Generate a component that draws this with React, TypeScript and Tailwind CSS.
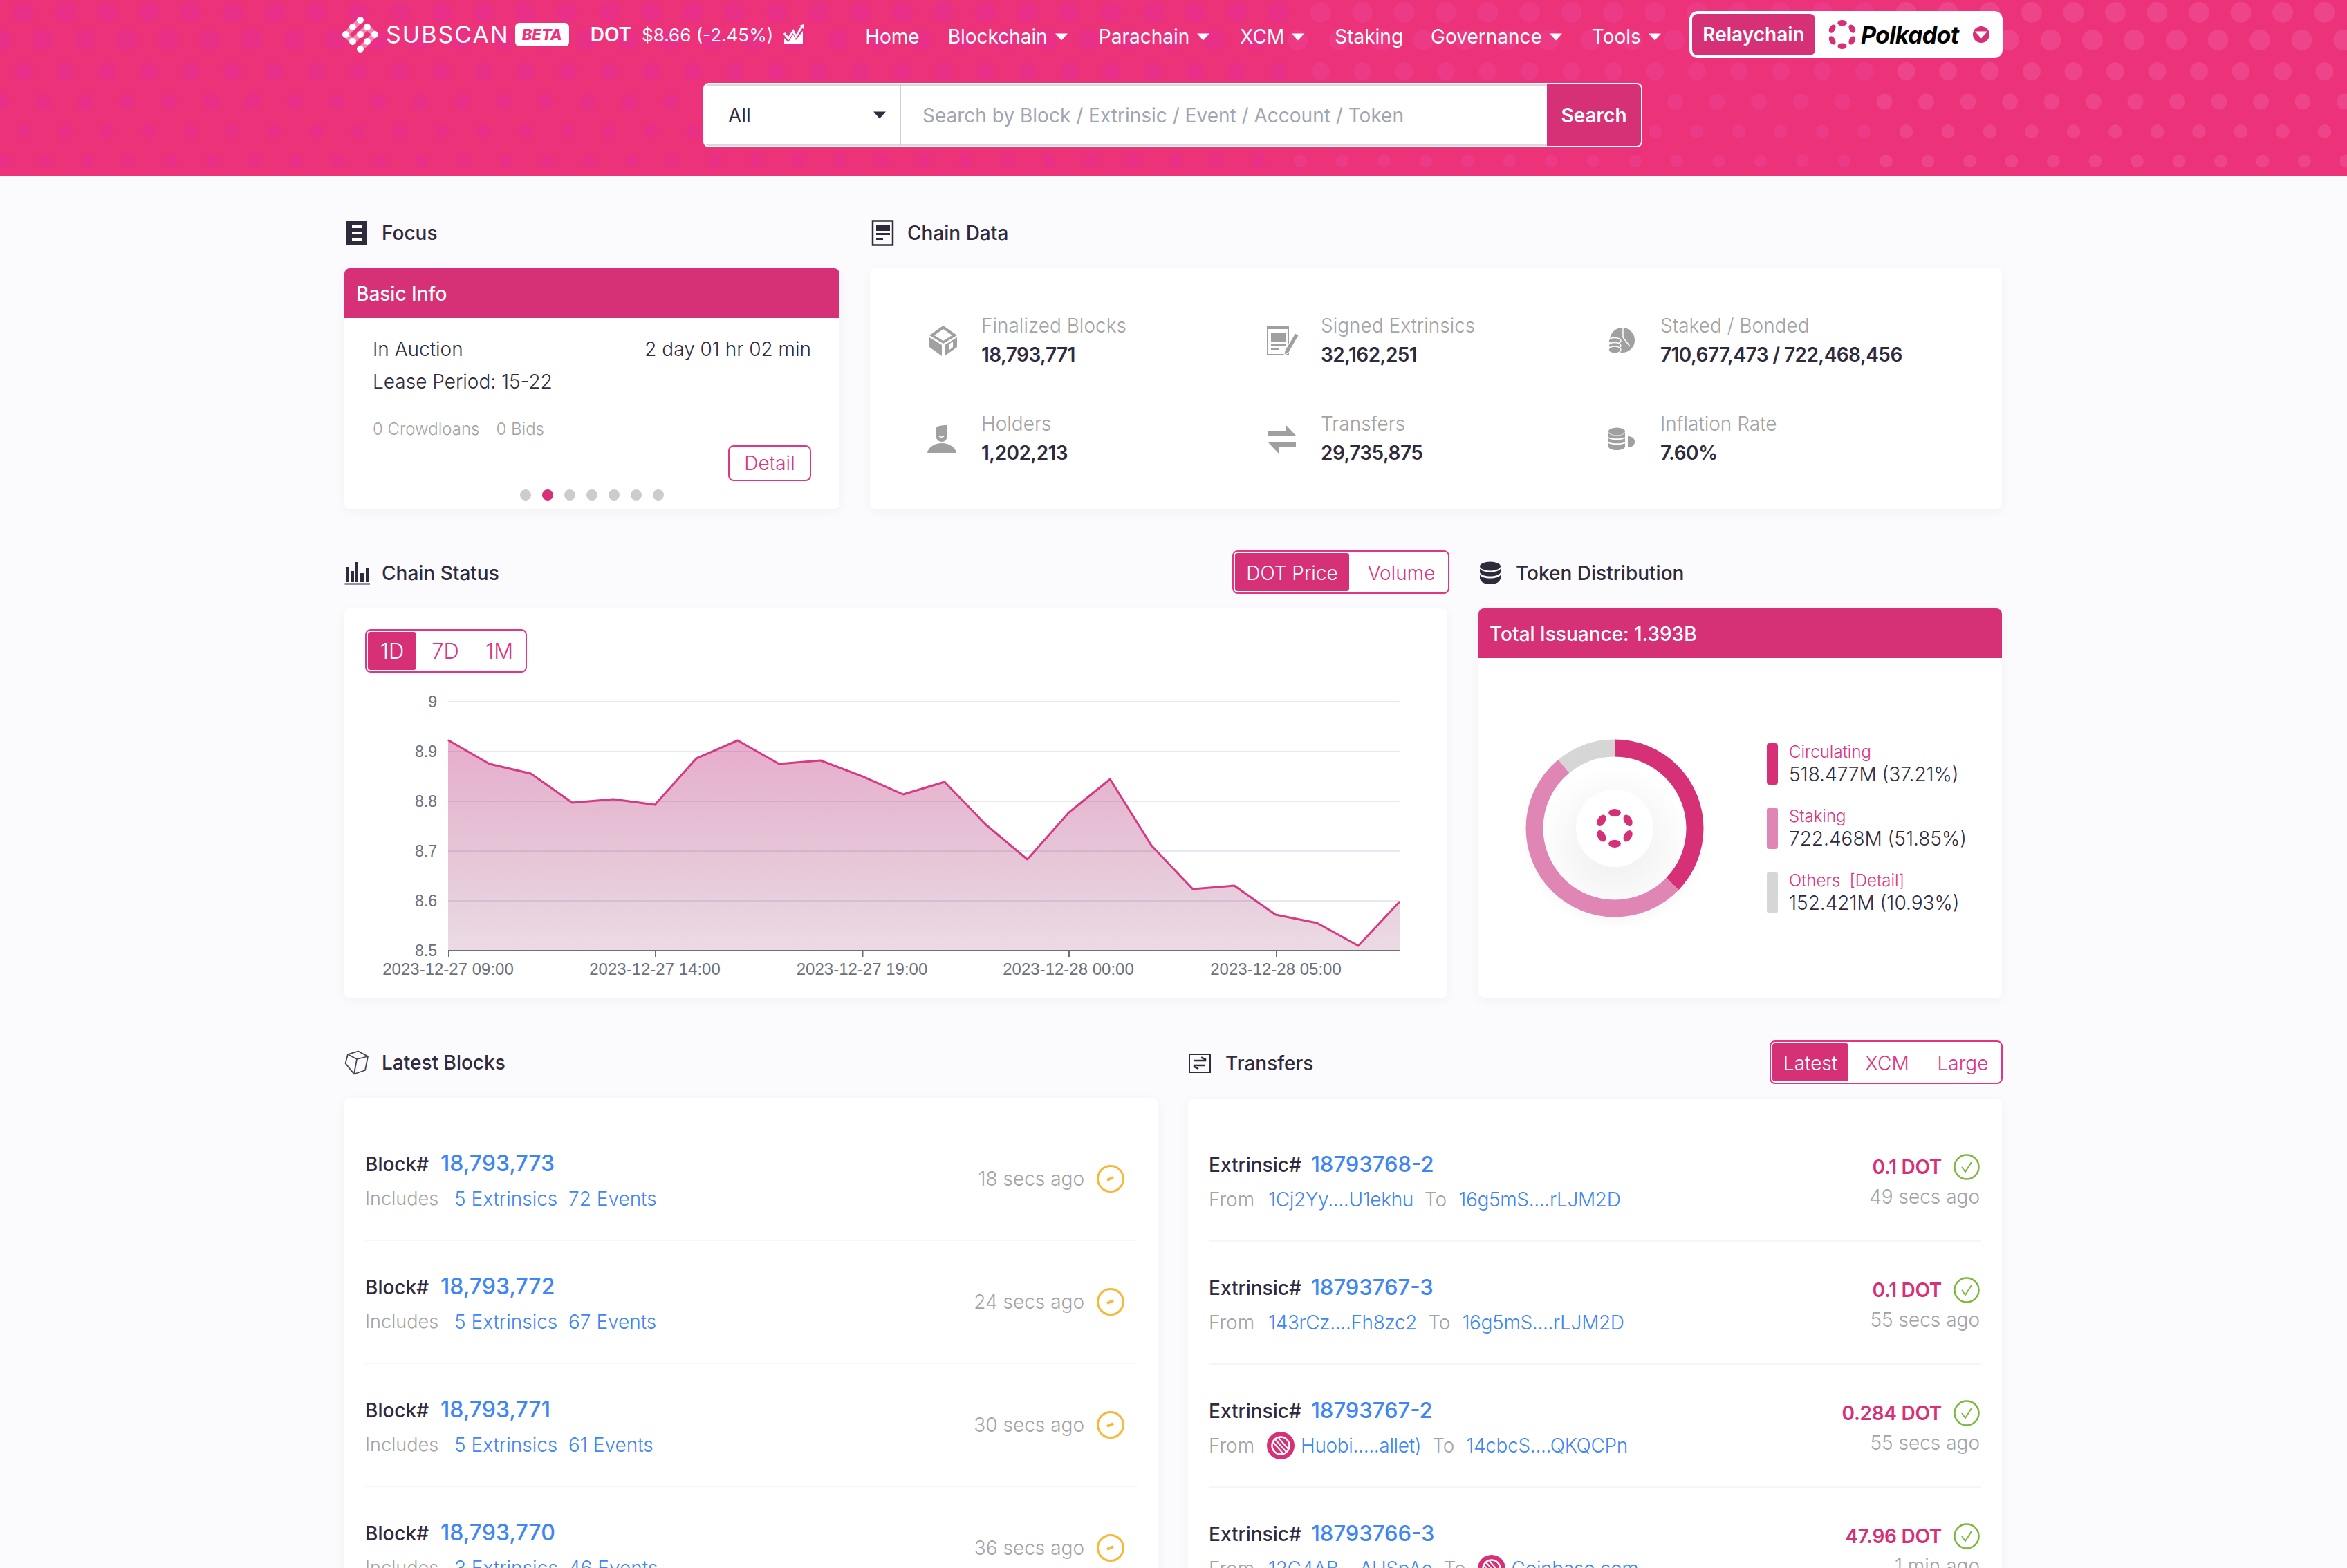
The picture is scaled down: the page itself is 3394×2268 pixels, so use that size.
import React from "react";

const PINK = "#d63076";

function Caret({ className = "", color = "#fff" }: { className?: string; color?: string }) {
  return (
    <svg width="18" height="11" viewBox="0 0 18 11" className={className}>
      <path d="M0 0.5H18L9 10.5Z" fill={color} />
    </svg>
  );
}

function DotLogo({ size, color = PINK }: { size: number; color?: string }) {
  return (
    <svg width={size} height={size} viewBox="0 0 60 60">
      <g fill={color}>
        <ellipse cx="30" cy="6" rx="9.5" ry="6" />
        <ellipse cx="30" cy="54" rx="9.5" ry="6" />
        <ellipse cx="9.5" cy="18" rx="9.5" ry="6" transform="rotate(-60 9.5 18)" />
        <ellipse cx="50.5" cy="18" rx="9.5" ry="6" transform="rotate(60 50.5 18)" />
        <ellipse cx="9.5" cy="42" rx="9.5" ry="6" transform="rotate(60 9.5 42)" />
        <ellipse cx="50.5" cy="42" rx="9.5" ry="6" transform="rotate(-60 50.5 42)" />
      </g>
    </svg>
  );
}

function HeaderDots() {
  const rows = [
    { y: 18, r: 15, x: 34 },
    { y: 58, r: 15, x: 1 },
    { y: 103, r: 13, x: 34 },
    { y: 147, r: 11.5, x: 2.5 },
    { y: 190, r: 10, x: 34 },
    { y: 233, r: 9.5, x: 5 },
  ];
  const cols = Array.from({ length: 57 }, (_, i) => i);
  return (
    <svg className="absolute inset-0" width="3394" height="254">
      {rows.map((row) =>
        cols.map((c) => {
          const cx = row.x + c * 60.5;
          const t = cx / 3394;
          const fill = t > 0.8 ? "#ee4489" : t > 0.55 ? "#ec3a86" : "#e93088";
          return <circle key={row.y + "-" + c} cx={cx} cy={row.y} r={row.r} fill={fill} />;
        })
      )}
    </svg>
  );
}

function SubscanMark() {
  const dots = [
    [31, 10],
    [20, 20],
    [41, 20],
    [10, 31],
    [31, 31],
    [52, 31],
    [20, 41],
    [41, 41],
    [31, 52],
  ];
  return (
    <svg width="62" height="62" viewBox="0 0 62 62">
      <g opacity="0.42" stroke="#fff" strokeWidth="8" fill="none" strokeLinejoin="miter">
        <path d="M31 10L10 31L20 41L41 20L52 31L31 52" />
      </g>
      {dots.map(([x, y]) => (
        <circle key={x + "-" + y} cx={x} cy={y} r="5" fill="#fff" />
      ))}
    </svg>
  );
}

function Header() {
  const nav: [string, boolean, string][] = [
    ["Home", false, "ml-[88px]"],
    ["Blockchain", true, "ml-[41px]"],
    ["Parachain", true, "ml-[45px]"],
    ["XCM", true, "ml-[44px]"],
    ["Staking", false, "ml-[44px]"],
    ["Governance", true, "ml-[40px]"],
    ["Tools", true, "ml-[43px]"],
  ];
  return (
    <header className="relative h-[254px] bg-[#ec3278] overflow-hidden">
      <HeaderDots />
      <div className="relative w-[2397px] ml-[498px] pt-[16px]">
        <div className="flex items-center h-[68px] text-white">
          <span className="ml-[-8px]">
            <SubscanMark />
          </span>
          <span className="ml-[6px] text-[34px] font-normal tracking-[0.06em] leading-none">SUBSCAN</span>
          <span className="ml-[8px] h-[34px] w-[78px] rounded-md bg-white text-[#ec3278] text-[22px] font-extrabold italic flex items-center justify-center">
            BETA
          </span>
          <span className="ml-[31px] font-semibold text-[28px]">DOT</span>
          <span className="ml-[15px] text-[26px]">$8.66 (-2.45%)</span>
          <svg className="ml-[15px]" width="30" height="30" viewBox="0 0 30 30">
            <path d="M1 13L7 21L14 10L18 18L27 3" fill="none" stroke="#fff" strokeWidth="3" />
            <path d="M1 29V20L7 26L14 15L18 23L28 10V29Z" fill="#fff" />
            <path d="M23 2L29 0L29 7Z" fill="#fff" />
          </svg>
          {nav.map(([t, c, m]) => (
            <span key={t} className={"flex items-center gap-[11px] text-[28px] pt-[6px] " + m}>
              {t}
              {c && <Caret />}
            </span>
          ))}
          <div className="ml-auto -mr-[1px] w-[453px] h-[68px] bg-white rounded-xl flex items-center pl-[4px]">
            <span className="w-[178px] h-[60px] rounded-lg bg-[#d63076] font-semibold text-[28px] flex items-center justify-center">
              Relaychain
            </span>
            <span className="ml-[18px] flex items-center">
              <DotLogo size={42} />
            </span>
            <span className="ml-[6px] text-black font-bold italic text-[34px] tracking-[-0.02em]">Polkadot</span>
            <span className="ml-[20px] w-[24px] h-[24px] rounded-full bg-[#d63076] flex items-center justify-center">
              <Caret />
            </span>
          </div>
        </div>
        <div className="mt-[36px] ml-[519px] w-[1358px] h-[93px] bg-white rounded-lg border-2 border-white flex overflow-hidden">
          <div className="w-[284px] flex items-center justify-between pl-[34px] pr-[20px] border-r-2 border-[#d0d0d4] shadow-[inset_0_3px_0_#dadada,inset_0_-3px_0_#dadada] text-[#302b3c] text-[28px]">
            All
            <Caret color="#302b3c" />
          </div>
          <div className="flex-1 flex items-center pl-[31px] shadow-[inset_0_3px_0_#dadada,inset_0_-3px_0_#dadada] text-[#a1a5b0] text-[28px]">
            Search by Block / Extrinsic / Event / Account / Token
          </div>
          <div className="w-[136px] bg-[#d63076] text-white font-semibold text-[28px] flex items-center justify-center">
            Search
          </div>
        </div>
      </div>
    </header>
  );
}

function Title({ icon, text }: { icon: React.ReactNode; text: string }) {
  return (
    <div className="flex items-center h-[60px]">
      <span className="w-[54px] h-[40px] flex items-center">{icon}</span>
      <span className="text-[28px] font-medium text-[#302b3c]">{text}</span>
    </div>
  );
}

function Toggle({ items, active, w }: { items: [string, number, string?][]; active: number; w: string }) {
  return (
    <div className={"h-[63px] border-2 border-[#e0357f] rounded-lg p-[2px] flex bg-white " + w}>
      {items.map(([t, width, extra], i) => (
        <span
          key={t}
          style={{ width }}
          className={
            "flex items-center justify-center rounded font-light pt-[2px] " +
            (extra ?? "text-[28px]") +
            " " +
            (i === active ? "bg-[#d63076] text-white" : "text-[#e0357f]")
          }
        >
          {t}
        </span>
      ))}
    </div>
  );
}

const cardCls = "bg-white rounded-lg shadow-[0_4px_16px_rgba(60,60,110,0.05)]";

function IconFocus() {
  return (
    <svg width="36" height="36" viewBox="0 0 36 36">
      <rect x="3" y="1" width="30" height="34" fill="#302b3c" />
      <rect x="11" y="7" width="14" height="4" fill="#fff" />
      <rect x="11" y="16" width="14" height="4" fill="#fff" />
      <rect x="11" y="25" width="14" height="4" fill="#fff" />
    </svg>
  );
}
function IconChainData() {
  return (
    <svg width="36" height="38" viewBox="0 0 36 38">
      <rect x="4" y="1.5" width="29" height="35" fill="none" stroke="#302b3c" strokeWidth="2.5" />
      <rect x="9" y="7" width="20" height="9" fill="#302b3c" />
      <rect x="9" y="19" width="20" height="3" fill="#302b3c" />
      <rect x="9" y="26" width="10" height="3" fill="#302b3c" />
    </svg>
  );
}
function IconStatus() {
  return (
    <svg width="38" height="34" viewBox="0 0 38 34">
      <path d="M0.5 32.5H37" stroke="#302b3c" strokeWidth="2" />
      <rect x="2" y="8" width="4" height="22" fill="#302b3c" />
      <rect x="9" y="14" width="5" height="16" fill="#302b3c" />
      <rect x="16" y="1" width="4" height="29" fill="#302b3c" />
      <rect x="23" y="17" width="5" height="13" fill="#302b3c" />
      <rect x="31" y="10" width="4" height="20" fill="#302b3c" />
    </svg>
  );
}
function IconDb() {
  return (
    <svg width="34" height="34" viewBox="0 0 34 34" fill="#302b3c">
      <ellipse cx="17" cy="7" rx="15" ry="6.5" />
      <path d="M2 10.5C4 14 10 15.5 17 15.5S30 14 32 10.5V16C30 20 24 21.5 17 21.5S4 20 2 16Z" />
      <path d="M2 19.5C4 23 10 24.5 17 24.5S30 23 32 19.5V25C30 31 24 33 17 33S4 31 2 25Z" />
    </svg>
  );
}
function IconCube() {
  return (
    <svg width="36" height="36" viewBox="0 0 36 36" fill="none" stroke="#4a4655" strokeWidth="1.8" strokeLinejoin="round">
      <path d="M20 1.5L34 9L30 29L14 34.5L1.5 19L5 6Z" />
      <path d="M5 6L18 13L34 9" />
      <path d="M18 13L14 34.5" />
    </svg>
  );
}
function IconTransferBox() {
  return (
    <svg width="34" height="30" viewBox="0 0 34 30" fill="none">
      <rect x="2" y="2" width="30" height="26" stroke="#302b3c" strokeWidth="2" />
      <path d="M9 11H25V9L19 6.5" stroke="#302b3c" strokeWidth="2.5" />
      <path d="M25 18H9V20L15 23" stroke="#302b3c" strokeWidth="2.5" />
    </svg>
  );
}

const G = "#a0a0a0";
const statIcons: React.ReactNode[] = [
  <svg key="a" width="42" height="46" viewBox="0 0 42 46">
    <path d="M21 1L41 15L21 27L1 15Z M21 6L8 15L21 23L34 15Z" fill={G} fillRule="evenodd" />
    <path d="M1 18L19 29V45L1 32Z" fill={G} />
    <path d="M23 29L41 18V32L23 45Z M29 28V37L35 32V24Z" fill={G} fillRule="evenodd" />
  </svg>,
  <svg key="b" width="48" height="44" viewBox="0 0 48 44" className="-ml-[3px]">
    <path d="M1 1H33V43H1Z M3 5V41H31V5Z" fill={G} fillRule="evenodd" />
    <rect x="7" y="11" width="21" height="12" fill={G} />
    <rect x="7" y="26" width="21" height="3" fill={G} />
    <rect x="7" y="32" width="11" height="3" fill={G} />
    <path d="M42 11L47 14L32 40L26 42L27 36Z" fill={G} stroke="#fff" strokeWidth="1" />
  </svg>,
  <svg key="c" width="40" height="38" viewBox="0 0 40 38">
    <circle cx="21" cy="18" r="18" fill={G} />
    <path d="M22 0V14L32 27" stroke="#fff" strokeWidth="1.5" fill="none" />
    <ellipse cx="10" cy="19" rx="9" ry="4.5" fill={G} stroke="#fff" strokeWidth="1.5" />
    <ellipse cx="10" cy="26" rx="9" ry="4.5" fill={G} stroke="#fff" strokeWidth="1.5" />
    <ellipse cx="10" cy="32" rx="9" ry="5" fill={G} stroke="#fff" strokeWidth="1.5" />
  </svg>,
  <svg key="d" width="44" height="42" viewBox="0 0 44 42" className="-ml-[3px]">
    <path d="M13 7C13 3 18 1 30 1V15C30 22 26 25 22 25C17 25 13 21 13 15Z" fill={G} />
    <path d="M18 16C19 19 24 19 25 16" stroke="#fff" strokeWidth="1.5" fill="none" />
    <path d="M1 41C2 33 12 27 22 27S42 33 43 41Z" fill={G} />
  </svg>,
  <svg key="e" width="40" height="44" viewBox="0 0 40 44">
    <path d="M25 1L40 17H0V11H25Z" fill={G} />
    <path d="M40 27V33H15V43L0 27Z" fill={G} />
  </svg>,
  <svg key="f" width="40" height="34" viewBox="0 0 40 34">
    <ellipse cx="13" cy="6" rx="12" ry="5.5" fill={G} />
    <path d="M1 8V28C1 31 7 33 13 33S25 31 25 28V8C23 11 18 12 13 12S3 11 1 8Z" fill={G} />
    <path d="M1 15C5 18 21 18 25 15M1 22C5 25 21 25 25 22" stroke="#fff" strokeWidth="2" fill="none" />
    <path d="M29 13C36 13 39 17 39 21C39 26 35 29 29 29Z" fill={G} />
  </svg>,
];

function Stat({ icon, label, value }: { icon: React.ReactNode; label: string; value: string }) {
  return (
    <div className="flex h-[77px] items-center">
      <span className="w-[76px] flex items-center">{icon}</span>
      <div className="flex flex-col gap-[6px] -mt-[2px]">
        <span className="text-[#a3a3a3] text-[28px] font-light leading-[36px]">{label}</span>
        <span className="text-[#302b3c] text-[28px] font-semibold leading-[36px] tracking-[-0.02em]">{value}</span>
      </div>
    </div>
  );
}

function TopRow() {
  return (
    <div className="grid grid-cols-[716px_1637px] gap-x-[44px]">
      <section>
        <Title icon={<IconFocus />} text="Focus" />
        <div className={"mt-[21px] h-[348px] flex flex-col overflow-hidden " + cardCls}>
          <div className="h-[72px] bg-[#d63076] text-white text-[28px] font-medium flex items-center pl-[17px] pt-[2px]">Basic Info</div>
          <div className="flex flex-col px-[41px] pt-[27px] text-[#302b3c] text-[28px] font-light">
            <div className="flex justify-between leading-[36px]">
              <span>In Auction</span>
              <span>2 day 01 hr 02 min</span>
            </div>
            <div className="mt-[11px] leading-[36px]">Lease Period: 15-22</div>
            <div className="mt-[33px] leading-[36px] text-[24px] text-[#a3a3a3] flex gap-[24px]">
              <span>0 Crowdloans</span>
              <span>0 Bids</span>
            </div>
            <div className="self-end mt-[5px] w-[120px] h-[52px] border-2 border-[#e0357f] rounded-lg text-[#e0357f] flex items-center justify-center">
              Detail
            </div>
          </div>
          <div className="mt-[12px] flex justify-center gap-[16px]">
            {[0, 1, 2, 3, 4, 5, 6].map((i) => (
              <span key={i} className={"w-[16px] h-[16px] rounded-full " + (i === 1 ? "bg-[#d63076]" : "bg-[#cccccc]")} />
            ))}
          </div>
        </div>
      </section>
      <section>
        <Title icon={<IconChainData />} text="Chain Data" />
        <div className={"mt-[21px] h-[348px] pl-[85px] pt-[66px] grid grid-cols-[491px_491px_1fr] content-start gap-y-[65px] " + cardCls}>
          <Stat icon={statIcons[0]} label="Finalized Blocks" value="18,793,771" />
          <Stat icon={statIcons[1]} label="Signed Extrinsics" value="32,162,251" />
          <Stat icon={statIcons[2]} label="Staked / Bonded" value="710,677,473 / 722,468,456" />
          <Stat icon={statIcons[3]} label="Holders" value="1,202,213" />
          <Stat icon={statIcons[4]} label="Transfers" value="29,735,875" />
          <Stat icon={statIcons[5]} label="Inflation Rate" value="7.60%" />
        </div>
      </section>
    </div>
  );
}

const pts: number[] = [1070.5, 1105, 1119, 1161, 1156, 1164, 1097, 1071, 1105, 1100, 1122.6, 1149, 1131, 1193, 1243, 1175.5, 1127, 1223, 1286, 1281, 1323, 1335, 1368, 1304];

function Chart() {
  const line = pts.map((y, i) => `${(648 + i * 59.83).toFixed(1)},${y}`).join(" ");
  const grid: [string, number][] = [
    ["9", 1015],
    ["8.9", 1087],
    ["8.8", 1159],
    ["8.7", 1231],
    ["8.6", 1303],
  ];
  const ticks: [string, number][] = [
    ["2023-12-27 09:00", 648],
    ["2023-12-27 14:00", 947],
    ["2023-12-27 19:00", 1246.5],
    ["2023-12-28 00:00", 1545],
    ["2023-12-28 05:00", 1845],
  ];
  const font = { fontFamily: "'Liberation Sans', sans-serif" };
  return (
    <svg width="1595" height="470" viewBox="498 973 1595 470" className="block">
      <defs>
        <linearGradient id="area" x1="0" x2="0" y1="0" y2="1">
          <stop offset="0" stopColor="#c4327f" stopOpacity="0.4" />
          <stop offset="1" stopColor="#8a2a60" stopOpacity="0.17" />
        </linearGradient>
      </defs>
      {grid.map(([t, y]) => (
        <g key={t}>
          <line x1="648" x2="2024" y1={y} y2={y} stroke="#e6e8f4" strokeWidth="2" />
          <text x="632" y={y + 8} textAnchor="end" fontSize="23" fill="#6e7079" style={font}>
            {t}
          </text>
        </g>
      ))}
      <text x="632" y="1383" textAnchor="end" fontSize="23" fill="#6e7079" style={font}>
        8.5
      </text>
      <polygon points={`648,1375 ${line} 2024,1375`} fill="url(#area)" />
      <polyline points={line} fill="none" stroke="#d63a82" strokeWidth="3" strokeLinejoin="round" />
      <line x1="648" x2="2024" y1="1375" y2="1375" stroke="#6e7079" strokeWidth="2" />
      {ticks.map(([t, x]) => (
        <g key={t}>
          <line x1={x + 1} x2={x + 1} y1="1375" y2="1384" stroke="#6e7079" strokeWidth="2" />
          <text x={x} y="1410" textAnchor="middle" fontSize="24" fill="#6e7079" style={font}>
            {t}
          </text>
        </g>
      ))}
    </svg>
  );
}

function Donut() {
  const c = { cx: 150, cy: 150, r: 116, fill: "none", strokeWidth: 25 };
  return (
    <div className="relative w-[300px] h-[300px]">
      <svg width="300" height="300" viewBox="0 0 300 300" className="absolute inset-0">
        <defs>
          <radialGradient id="disc" cx="0.5" cy="0.62" r="0.55">
            <stop offset="0.3" stopColor="#f3f3f3" />
            <stop offset="1" stopColor="#ffffff" />
          </radialGradient>
          <filter id="soft" x="-30%" y="-30%" width="160%" height="160%">
            <feGaussianBlur stdDeviation="9" />
          </filter>
        </defs>
        <circle cx="150" cy="158" r="126" fill="#000" opacity="0.04" filter="url(#soft)" />
        <circle cx="150" cy="150" r="128" fill="#fff" />
        <circle cx="150" cy="150" r="105" fill="url(#disc)" />
        <circle cx="150" cy="150" r="56" fill="#fff" />
        <g transform="rotate(-90 150 150)">
          <circle {...c} stroke="#d63076" pathLength={100} strokeDasharray="37.21 100" />
          <circle {...c} stroke="#e086b5" pathLength={100} strokeDasharray="51.85 100" strokeDashoffset={-37.21} />
          <circle {...c} stroke="#d6d6d6" pathLength={100} strokeDasharray="10.94 100" strokeDashoffset={-89.06} />
        </g>
      </svg>
      <span className="absolute left-[122px] top-[122px]">
        <DotLogo size={56} />
      </span>
    </div>
  );
}

function Legend({ color, label, value }: { color: string; label: React.ReactNode; value: string }) {
  return (
    <div className="flex h-[60px] gap-[16px]">
      <span className={"w-[16px] h-[60px] rounded " + color} />
      <div className="flex flex-col justify-between">
        <span className="text-[#e0357f] text-[24px] font-light leading-[26px] flex gap-[13px]">{label}</span>
        <span className="text-[#302b3c] text-[28px] font-light leading-[30px]">{value}</span>
      </div>
    </div>
  );
}

function MiddleRow() {
  return (
    <div className="mt-[63px] grid grid-cols-[1595px_757px] gap-x-[45px]">
      <section>
        <div className="flex justify-between items-center">
          <Title icon={<IconStatus />} text="Chain Status" />
          <Toggle items={[["DOT Price", 165], ["Volume", 141, "text-[28px] pl-[10px]"]]} active={0} w="w-[314px] -mr-[3px] -mt-[3px]" />
        </div>
        <div className={"mt-[21px] h-[563px] " + cardCls}>
          <div className="pt-[30px] pl-[30px]">
            <Toggle
              items={[
                ["1D", 70, "text-[31px]"],
                ["7D", 84, "text-[31px]"],
                ["1M", 72, "text-[31px]"],
              ]}
              active={0}
              w="w-[234px]"
            />
          </div>
          <Chart />
        </div>
      </section>
      <section>
        <Title icon={<IconDb />} text="Token Distribution" />
        <div className={"mt-[21px] h-[563px] flex flex-col overflow-hidden " + cardCls}>
          <div className="h-[72px] bg-[#d63076] text-white text-[28px] font-medium flex items-center pl-[16px] pt-[2px]">Total Issuance: 1.393B</div>
          <div className="flex-1 flex items-center pl-[47px] gap-[70px]">
            <Donut />
            <div className="flex flex-col gap-[33px]">
              <Legend color="bg-[#d63076]" label="Circulating" value="518.477M (37.21%)" />
              <Legend color="bg-[#e086b5]" label="Staking" value="722.468M (51.85%)" />
              <Legend
                color="bg-[#d6d6d6]"
                label={
                  <>
                    <span>Others</span>
                    <span>[Detail]</span>
                  </>
                }
                value="152.421M (10.93%)"
              />
            </div>
          </div>
        </div>
      </section>
    </div>
  );
}

function ClockIcon() {
  return (
    <svg width="40" height="40" viewBox="0 0 40 40" fill="none">
      <circle cx="20" cy="20" r="18.5" stroke="#f5b93b" strokeWidth="3" />
      <path d="M15 22L24 18" stroke="#f5b93b" strokeWidth="4" />
    </svg>
  );
}
function CheckIcon() {
  return (
    <svg width="38" height="38" viewBox="0 0 38 38" fill="none">
      <circle cx="19" cy="19" r="17.5" stroke="#7cb83c" strokeWidth="2.5" />
      <path d="M12 19L17 26L26 12" stroke="#7cb83c" strokeWidth="2" />
    </svg>
  );
}
function ExchangeBadge() {
  return (
    <svg width="40" height="40" viewBox="0 0 40 40" fill="none">
      <circle cx="20" cy="20" r="20" fill="#d63076" />
      <circle cx="20" cy="20" r="12.5" stroke="#fff" strokeWidth="2.5" />
      <path d="M12 11L28 29M17 9L31 25M9 15L23 31" stroke="#fff" strokeWidth="2" />
    </svg>
  );
}

const A = ({ children }: { children: React.ReactNode }) => <span className="text-[#3f86f5] font-light">{children}</span>;
const Addr = ({ children }: { children: React.ReactNode }) => (
  <span className="text-[#3f86f5] font-light tracking-[-0.012em]">{children}</span>
);

function BlockRow({ n, ex, ev, time }: { n: string; ex: string; ev: string; time: string }) {
  return (
    <div className="h-[178px] flex items-center justify-between border-b-2 border-[#f5f5fa] pr-[18px]">
      <div className="flex flex-col gap-[14px] pt-[7px]">
        <div className="flex items-baseline leading-[36px]">
          <span className="w-[109px] text-[28px] font-medium text-[#302b3c]">Block#</span>
          <span className="text-[32px] font-medium text-[#3f86f5]">{n}</span>
        </div>
        <div className="flex text-[28px] leading-[36px] font-light">
          <span className="w-[129px] text-[#a3a3a3] text-[27px]">Includes</span>
          <span className="w-[165px]">
            <A>{ex}</A>
          </span>
          <A>{ev}</A>
        </div>
      </div>
      <div className="flex items-center gap-[18px]">
        <span className="text-[#a3a3a3] text-[28px] font-light">{time}</span>
        <ClockIcon />
      </div>
    </div>
  );
}

function From({ children }: { children: React.ReactNode }) {
  return <div className="flex items-center text-[28px] h-[36px] font-light text-[#a3a3a3]">{children}</div>;
}

function TransferRow({ n, amt, time, from }: { n: string; amt: string; time: string; from: React.ReactNode }) {
  return (
    <div className="h-[178px] flex items-center justify-between border-b-2 border-[#f5f5fa]">
      <div className="flex flex-col gap-[14px] pt-[6px]">
        <div className="flex items-baseline leading-[36px]">
          <span className="w-[148px] text-[28px] font-medium text-[#302b3c]">Extrinsic#</span>
          <span className="text-[31px] font-medium text-[#3f86f5]">{n}</span>
        </div>
        {from}
      </div>
      <div className="flex flex-col items-end gap-[4px] pt-[3px] pr-[2px]">
        <div className="flex items-center gap-[17px]">
          <span className="text-[28px] font-semibold text-[#d63076] tracking-[-0.01em]">{amt}</span>
          <CheckIcon />
        </div>
        <span className="text-[#a3a3a3] text-[28px] font-light leading-[36px]">{time}</span>
      </div>
    </div>
  );
}

function BottomRow() {
  return (
    <div className="mt-[64px] grid grid-cols-[1176px_1177px] gap-x-[44px]">
      <section>
        <Title icon={<IconCube />} text="Latest Blocks" />
        <div className={"mt-[21px] pt-[29px] px-[30px] " + cardCls}>
          <BlockRow n="18,793,773" ex="5 Extrinsics" ev="72 Events" time="18 secs ago" />
          <BlockRow n="18,793,772" ex="5 Extrinsics" ev="67 Events" time="24 secs ago" />
          <BlockRow n="18,793,771" ex="5 Extrinsics" ev="61 Events" time="30 secs ago" />
          <BlockRow n="18,793,770" ex="3 Extrinsics" ev="46 Events" time="36 secs ago" />
        </div>
      </section>
      <section>
        <div className="flex justify-between items-center">
          <Title icon={<IconTransferBox />} text="Transfers" />
          <Toggle items={[["Latest", 110], ["XCM", 112], ["Large", 107]]} active={0} w="w-[337px] -mr-[1px] -mt-[2px]" />
        </div>
        <div className={"mt-[21px] pt-[29px] px-[30px] " + cardCls}>
          <TransferRow
            n="18793768-2"
            amt="0.1 DOT"
            time="49 secs ago"
            from={
              <From>
                <span className="w-[86px]">From</span>
                <Addr>1Cj2Yy....U1ekhu</Addr>
                <span className="ml-[16px] mr-[17px]">To</span>
                <Addr>16g5mS....rLJM2D</Addr>
              </From>
            }
          />
          <TransferRow
            n="18793767-3"
            amt="0.1 DOT"
            time="55 secs ago"
            from={
              <From>
                <span className="w-[86px]">From</span>
                <Addr>143rCz....Fh8zc2</Addr>
                <span className="ml-[16px] mr-[17px]">To</span>
                <Addr>16g5mS....rLJM2D</Addr>
              </From>
            }
          />
          <TransferRow
            n="18793767-2"
            amt="0.284 DOT"
            time="55 secs ago"
            from={
              <From>
                <span className="w-[84px]">From</span>
                <ExchangeBadge />
                <span className="ml-[9px]">
                  <Addr>Huobi.....allet)</Addr>
                </span>
                <span className="ml-[16px] mr-[17px]">To</span>
                <Addr>14cbcS....QKQCPn</Addr>
              </From>
            }
          />
          <TransferRow
            n="18793766-3"
            amt="47.96 DOT"
            time="1 min ago"
            from={
              <From>
                <span className="w-[86px]">From</span>
                <Addr>12G4AB....AUSpAe</Addr>
                <span className="ml-[16px] mr-[17px]">To</span>
                <ExchangeBadge />
                <span className="ml-[9px]">
                  <Addr>Coinbase.com</Addr>
                </span>
              </From>
            }
          />
        </div>
      </section>
    </div>
  );
}

export default function App() {
  return (
    <div className="h-[2268px] overflow-hidden bg-[#fbfbfd] font-['Inter',sans-serif]">
      <Header />
      <main className="w-[2397px] ml-[498px] pt-[53px]">
        <TopRow />
        <MiddleRow />
        <BottomRow />
      </main>
    </div>
  );
}
